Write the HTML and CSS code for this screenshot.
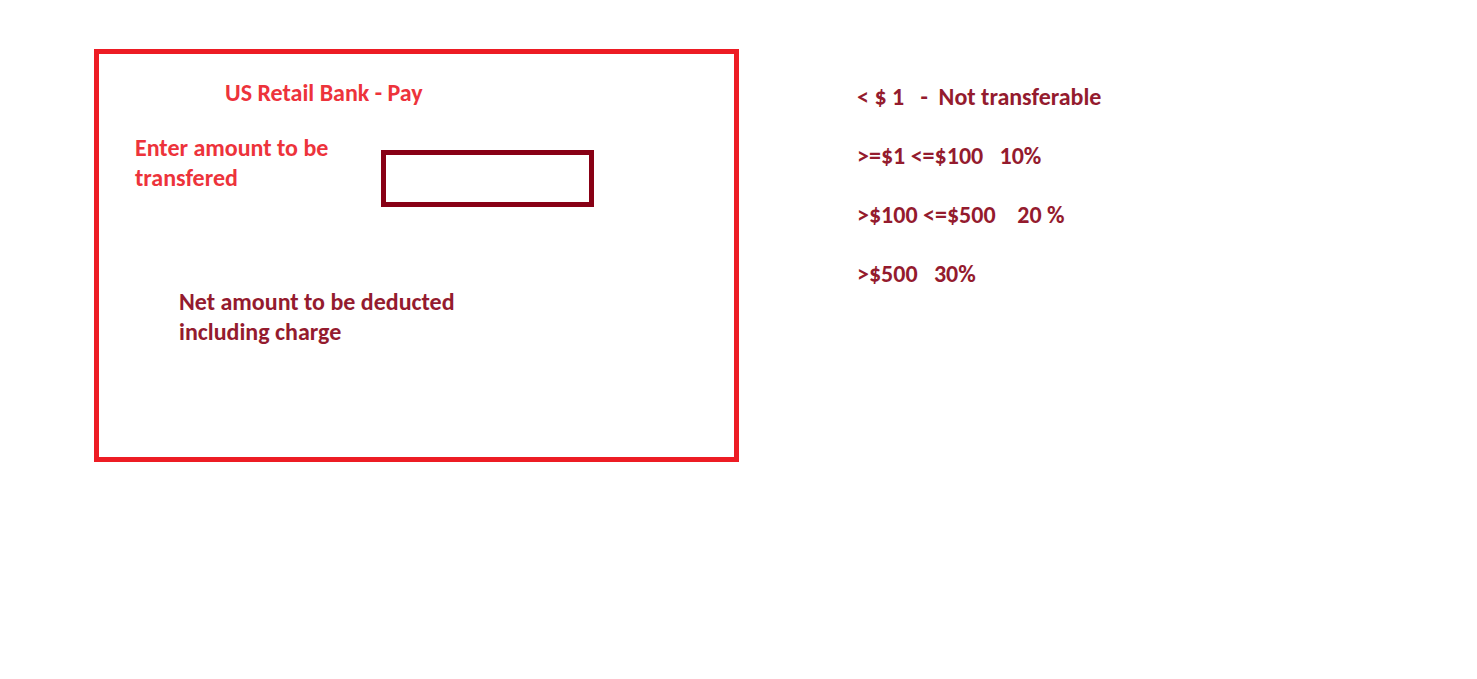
FILE: index.html
```html
<!DOCTYPE html>
<html lang="en">
<head>
<meta charset="utf-8">
<title>US Retail Bank - Pay</title>
<link rel="stylesheet" href="styles.css">
</head>
<body>
<main class="page">
  <form class="card">
    <h1 class="title">US Retail Bank - Pay</h1>
    <div class="field">
      <label class="field-label" for="amount">Enter amount to be transfered</label>
      <input class="field-input" id="amount" type="text">
    </div>
    <p class="result">Net amount to be deducted including charge</p>
  </form>
  <section class="rates">
    <p class="rate">&lt; $ 1   -  Not transferable</p>
    <p class="rate">&gt;=$1 &lt;=$100   10%</p>
    <p class="rate">&gt;$100 &lt;=$500    20 %</p>
    <p class="rate">&gt;$500   30%</p>
  </section>
</main>
</body>
</html>
```

FILE: styles.css
```css
* { box-sizing: border-box; }
body {
  margin: 0;
  background: #fff;
  color: #941b2e;
  font: 700 24px/30px Carlito, Calibri, Lato, sans-serif;
}
h1, p { margin: 0; font: inherit; }
.page {
  display: grid;
  grid-template-columns: 645fr 620fr;
  gap: 118px;
  align-items: start;
  padding: 49px 0 0 94px;
}
.card {
  padding: 24px 36px 110px;
  border: 5px solid #ed1c24;
}
.title {
  margin-left: 90px;
  color: #ed333b;
}
.field {
  display: flex;
  align-items: flex-start;
  margin-top: 25px;
}
.field-label {
  width: 246px;
  padding-right: 40px;
  color: #ed333b;
}
.field-input {
  width: 213px;
  height: 57px;
  margin-top: 17px;
  padding: 0 10px;
  border: 5px solid #880015;
  border-radius: 0;
  background: #fff;
  color: inherit;
  font: inherit;
}
.result {
  width: 320px;
  margin: 80px 0 0 44px;
}
.rates {
  display: grid;
  gap: 29px;
  padding-top: 33px;
}
.rate { white-space: pre-wrap; }
```
